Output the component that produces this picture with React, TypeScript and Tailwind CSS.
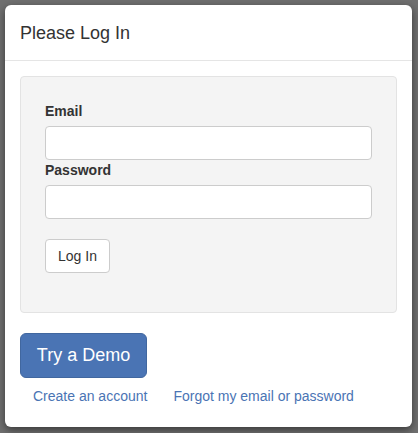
export default function App() {
  return (
    <div
      className="w-[418px] h-[433px] bg-[#707070] pt-[5px] pl-[5px] overflow-hidden"
      style={{ fontFamily: '"Liberation Sans", Arial, sans-serif' }}
    >
      <div className="w-[407px] h-[422px] bg-white rounded-[6px] shadow-[0_3px_9px_rgba(0,0,0,0.5)] flex flex-col">
        <div className="h-[56px] px-[15px] flex items-center border-b border-[#e5e5e5]">
          <h4 className="text-[18px] leading-[20px] text-[#333]">Please Log In</h4>
        </div>

        <div className="p-[15px] flex flex-col">
          <div className="bg-[#f4f4f4] border border-[#e3e3e3] rounded-[4px] px-[24px] pt-[24px] pb-[39px] flex flex-col">
            <label className="text-[14px] leading-[20px] font-bold text-[#333] mb-[5px]">Email</label>
            <input
              type="email"
              className="h-[34px] bg-white border border-[#ccc] rounded-[4px] px-3 text-[14px] outline-none"
            />
            <label className="text-[14px] leading-[20px] font-bold text-[#333] mb-[5px]">Password</label>
            <input
              type="password"
              className="h-[34px] bg-white border border-[#ccc] rounded-[4px] px-3 text-[14px] outline-none"
            />
            <div className="mt-[20px]">
              <button className="h-[34px] w-[65px] bg-white border border-[#ccc] rounded-[4px] text-[14px] text-[#333]">
                Log In
              </button>
            </div>
          </div>

          <div className="mt-[20px]">
            <button className="w-[127px] h-[45px] bg-[#4a74b4] border border-[#41679f] rounded-[6px] text-[18px] text-white">
              Try a Demo
            </button>
          </div>

          <div className="mt-[8px] flex text-[14px] leading-[20px] text-[#4a74b4]">
            <a className="px-[13px]">Create an account</a>
            <a className="px-[13px]">Forgot my email or password</a>
          </div>
        </div>
      </div>
    </div>
  );
}
